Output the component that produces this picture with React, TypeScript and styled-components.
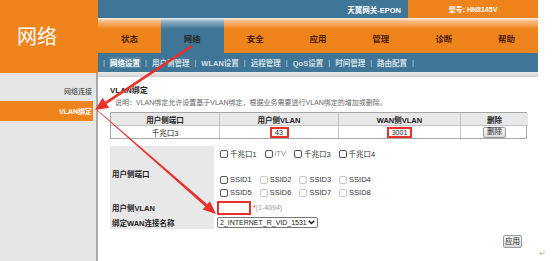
import React from 'react';
import styled, { createGlobalStyle } from 'styled-components';

const ORANGE = '#F0841C';
const BLUE = '#3F7596';
const RED = '#E8312B';

const GlobalStyle = createGlobalStyle`
  html, body { margin: 0; padding: 0; background: #fff; }
  body {
    font-family: "Liberation Sans", "Noto Sans CJK SC", sans-serif;
    font-size: 7.5px;
    color: #333;
  }
  * { box-sizing: border-box; }
`;

const Page = styled.div`
  position: relative;
  width: 554px;
  height: 261px;
  overflow: hidden;
  display: flex;
`;

const Frame = styled.div`
  width: 538px;
  height: 261px;
  display: flex;
  flex-shrink: 0;
`;

const LeftCol = styled.div`
  width: 98px;
  flex-shrink: 0;
  display: flex;
  flex-direction: column;
`;

const Logo = styled.div`
  height: 73px;
  background: ${ORANGE};
  color: #fff;
  font-family: "Noto Sans CJK SC", sans-serif;
  font-size: 20px;
  display: flex;
  align-items: center;
  padding-left: 17px;
  padding-bottom: 2px;
`;

const Sidebar = styled.div`
  flex: 1;
  background: #e6e6e6;
  border-right: 2px solid #a9a9a9;
  padding-top: 8px;
  display: flex;
  flex-direction: column;
`;

const SideItem = styled.div<{ $active?: boolean }>`
  height: 20px;
  display: flex;
  align-items: center;
  justify-content: flex-end;
  font-size: 7px;
  padding-right: ${(p) => (p.$active ? '1px' : '4px')};
  margin-right: ${(p) => (p.$active ? '3px' : '0')};
  background: ${(p) => (p.$active ? ORANGE : 'transparent')};
  color: ${(p) => (p.$active ? '#fff' : '#333')};
  font-weight: ${(p) => (p.$active ? 'bold' : 'normal')};
`;

const RightCol = styled.div`
  flex: 1;
  display: flex;
  flex-direction: column;
`;

const TopBar = styled.div`
  height: 18px;
  display: flex;
`;

const TopTitle = styled.div`
  flex: 1;
  background: ${BLUE};
  color: #fff;
  font-weight: bold;
  display: flex;
  align-items: center;
  justify-content: flex-end;
  padding-right: 7px;
`;

const ModelBox = styled.div`
  width: 130px;
  background: ${ORANGE};
  color: #fff;
  font-weight: bold;
  font-size: 7px;
  display: flex;
  align-items: center;
  justify-content: center;
`;

const NavTabs = styled.div`
  height: 35px;
  display: flex;
`;

const Tab = styled.div<{ $active?: boolean }>`
  flex: 1;
  background-color: ${(p) => (p.$active ? BLUE : ORANGE)};
  background-image: linear-gradient(
    to bottom,
    rgba(255, 255, 255, 0.9) 0px,
    rgba(255, 255, 255, 0.45) 3px,
    rgba(255, 255, 255, 0) 11px
  );
  color: ${(p) => (p.$active ? '#2a2a2a' : '#4a2000')};
  font-weight: bold;
  font-size: 8.5px;
  display: flex;
  align-items: center;
  justify-content: center;
  padding-top: 5px;
`;

const SubNav = styled.div`
  height: 19px;
  background: ${BLUE};
  display: flex;
  align-items: center;
  padding-left: 5px;
  gap: 4px;
  color: #d3dde5;
  font-weight: bold;
`;

const SubItem = styled.span<{ $active?: boolean }>`
  color: ${(p) => (p.$active ? '#fff' : '#d6e0e8')};
  background: ${(p) => (p.$active ? 'rgba(255,255,255,0.12)' : 'transparent')};
  padding: 0 1px;
`;

const Sep = styled.span`
  color: #c9d5de;
  font-weight: normal;
`;

const Strip = styled.div`
  height: 5px;
  background: linear-gradient(to bottom, #ececec, #d0d0d0);
`;

const Content = styled.div`
  flex: 1;
  padding: 8px 0 0 12px;
  display: flex;
  flex-direction: column;
`;

const Title = styled.div`
  font-weight: bold;
  font-size: 8px;
  line-height: 12px;
  color: #222;
`;

const Desc = styled.div`
  font-size: 7px;
  line-height: 11px;
  color: #666;
  padding-left: 5px;
`;

const BindTable = styled.div`
  margin-top: 4px;
  width: 417px;
  display: grid;
  grid-template-columns: 108px 119px 122px 68px;
  border: 1px solid #a8a8a8;
`;

const HeadCell = styled.div`
  height: 12px;
  background: #e8e8e8;
  font-weight: bold;
  color: #222;
  display: flex;
  align-items: center;
  justify-content: center;
  border-left: 1px solid #c4c4c4;
  &:first-child { border-left: none; }
`;

const DataCell = styled.div<{ $first?: boolean }>`
  height: 13px;
  display: flex;
  align-items: center;
  justify-content: center;
  border-top: 1px solid #c4c4c4;
  border-left: ${(p) => (p.$first ? 'none' : '1px solid #c4c4c4')};
  color: #222;
`;

const Marked = styled.span<{ $w: number }>`
  width: ${(p) => p.$w}px;
  height: 11px;
  border: 2px solid ${RED};
  display: flex;
  align-items: center;
  justify-content: center;
  line-height: 7px;
  font-size: 7px;
  overflow: visible;
`;

const SmallButton = styled.button`
  font-family: inherit;
  font-size: 7.5px;
  color: #222;
  padding: 0;
  height: 11px;
  width: 23px;
  border: 1px solid #9a9a9a;
  border-radius: 2px;
  background: linear-gradient(#f7f7f7, #dcdcdc);
  display: flex;
  align-items: center;
  justify-content: center;
  line-height: 1;
`;

const FormGrid = styled.div`
  margin-top: 7px;
  width: 417px;
  display: grid;
  grid-template-columns: 104px 1fr;
`;

const FormLabel = styled.div<{ $h: number }>`
  height: ${(p) => p.$h}px;
  background: #e8e8e8;
  font-weight: bold;
  color: #222;
  display: flex;
  align-items: center;
  padding-left: 2px;
`;

const FormValue = styled.div<{ $h: number }>`
  height: ${(p) => p.$h}px;
  padding-left: 3px;
  display: flex;
  flex-direction: column;
  justify-content: center;
`;

const PortValue = styled(FormValue)`
  justify-content: flex-start;
  padding-top: 1px;
`;

const CheckLine = styled.div`
  height: 13px;
  display: flex;
  align-items: center;
`;

const CheckItem = styled.label<{ $muted?: boolean }>`
  display: flex;
  align-items: center;
  margin-left: 3px;
  margin-right: 5px;
  color: ${(p) => (p.$muted ? '#888' : '#333')};
`;

const Box = styled.span<{ $disabled?: boolean }>`
  width: 8px;
  height: 8px;
  border: 1px solid ${(p) => (p.$disabled ? '#c8c8c8' : '#555')};
  border-radius: 2px;
  background: #fff;
  margin-right: 2px;
  flex-shrink: 0;
`;

const InputRow = styled.div`
  display: flex;
  align-items: center;
`;

const TextInput = styled.span`
  width: 34px;
  height: 14px;
  border: 2px solid ${RED};
  background: #fff;
`;

const Hint = styled.span`
  margin-left: 2px;
  color: #999;
  font-size: 7px;
`;

const Star = styled.span`
  color: ${RED};
`;

const Select = styled.div`
  width: 101px;
  height: 11px;
  border: 1px solid #777;
  border-radius: 2px;
  display: flex;
  align-items: center;
  justify-content: space-between;
  padding: 0 2px;
  color: #222;
  font-size: 7px;
  background: #fff;
  white-space: nowrap;
`;

const ButtonRow = styled.div`
  width: 417px;
  margin-top: 6px;
  display: flex;
  justify-content: flex-end;
  padding-right: 5px;
`;

const ApplyButton = styled(SmallButton)`
  width: 19px;
  height: 13px;
`;

const Margin = styled.div`
  flex: 1;
  display: flex;
  align-items: flex-end;
  padding: 0 0 3px 1px;
  color: #aaa;
  font-size: 8px;
`;

const Overlay = styled.svg`
  position: absolute;
  left: 0;
  top: 0;
  pointer-events: none;
`;

type Pt = [number, number];

function arrowParts(from: Pt, to: Pt, headLen: number, headHalf: number, w0: number, w1: number) {
  const dx = to[0] - from[0];
  const dy = to[1] - from[1];
  const len = Math.hypot(dx, dy);
  const ux = dx / len;
  const uy = dy / len;
  const px = -uy;
  const py = ux;
  const bx = to[0] - ux * headLen;
  const by = to[1] - uy * headLen;
  const f = (n: number) => n.toFixed(2);
  const shaft = [
    [from[0] + px * w0 / 2, from[1] + py * w0 / 2],
    [bx + px * w1 / 2, by + py * w1 / 2],
    [bx - px * w1 / 2, by - py * w1 / 2],
    [from[0] - px * w0 / 2, from[1] - py * w0 / 2],
  ]
    .map((p) => `${f(p[0])},${f(p[1])}`)
    .join(' ');
  const head = [
    [to[0], to[1]],
    [bx + px * headHalf, by + py * headHalf],
    [bx - px * headHalf, by - py * headHalf],
  ]
    .map((p) => `${f(p[0])},${f(p[1])}`)
    .join(' ');
  return { shaft, head };
}

const tabs = ['状态', '网络', '安全', '应用', '管理', '诊断', '帮助'];
const subs = ['网络设置', '用户侧管理', 'WLAN设置', '远程管理', 'QoS设置', '时间管理', '路由配置'];

export default function App() {
  const a1 = arrowParts([192, 46], [95, 110], 13, 6, 2.6, 2.6);
  const a2 = arrowParts([97, 110], [216, 214], 13, 5.5, 0.6, 3);
  return (
    <>
      <GlobalStyle />
      <Page>
        <Frame>
          <LeftCol>
            <Logo>网络</Logo>
            <Sidebar>
              <SideItem>网络连接</SideItem>
              <SideItem $active>VLAN绑定</SideItem>
            </Sidebar>
          </LeftCol>
          <RightCol>
            <TopBar>
              <TopTitle>天翼网关-EPON</TopTitle>
              <ModelBox>型号: HN8145V</ModelBox>
            </TopBar>
            <NavTabs>
              {tabs.map((t, i) => (
                <Tab key={t} $active={i === 1}>
                  {t}
                </Tab>
              ))}
            </NavTabs>
            <SubNav>
              <Sep>|</Sep>
              {subs.map((s, i) => (
                <React.Fragment key={s}>
                  <SubItem $active={i === 0}>{s}</SubItem>
                  <Sep>|</Sep>
                </React.Fragment>
              ))}
            </SubNav>
            <Strip />
            <Content>
              <Title>VLAN绑定</Title>
              <Desc>说明：VLAN绑定允许设置基于VLAN绑定，根据业务需要进行VLAN绑定的增加或删除。</Desc>
              <BindTable>
                <HeadCell>用户侧端口</HeadCell>
                <HeadCell>用户侧VLAN</HeadCell>
                <HeadCell>WAN侧VLAN</HeadCell>
                <HeadCell>删除</HeadCell>
                <DataCell $first>千兆口3</DataCell>
                <DataCell>
                  <Marked $w={19}>43</Marked>
                </DataCell>
                <DataCell>
                  <Marked $w={25}>3001</Marked>
                </DataCell>
                <DataCell>
                  <SmallButton>删除</SmallButton>
                </DataCell>
              </BindTable>
              <FormGrid>
                <FormLabel $h={54}>用户侧端口</FormLabel>
                <PortValue $h={54}>
                  <CheckLine>
                    <CheckItem>
                      <Box />千兆口1
                    </CheckItem>
                    <CheckItem $muted>
                      <Box />iTV
                    </CheckItem>
                    <CheckItem>
                      <Box />千兆口3
                    </CheckItem>
                    <CheckItem>
                      <Box />千兆口4
                    </CheckItem>
                  </CheckLine>
                  <CheckLine />
                  <CheckLine>
                    <CheckItem>
                      <Box />SSID1
                    </CheckItem>
                    <CheckItem>
                      <Box $disabled />SSID2
                    </CheckItem>
                    <CheckItem>
                      <Box $disabled />SSID3
                    </CheckItem>
                    <CheckItem>
                      <Box $disabled />SSID4
                    </CheckItem>
                  </CheckLine>
                  <CheckLine>
                    <CheckItem>
                      <Box />SSID5
                    </CheckItem>
                    <CheckItem>
                      <Box $disabled />SSID6
                    </CheckItem>
                    <CheckItem>
                      <Box $disabled />SSID7
                    </CheckItem>
                    <CheckItem>
                      <Box $disabled />SSID8
                    </CheckItem>
                  </CheckLine>
                </PortValue>
                <FormLabel $h={15}>用户侧VLAN</FormLabel>
                <FormValue $h={15}>
                  <InputRow>
                    <TextInput />
                    <Hint>
                      <Star>*</Star>(1-4094)
                    </Hint>
                  </InputRow>
                </FormValue>
                <FormLabel $h={14}>绑定WAN连接名称</FormLabel>
                <FormValue $h={14}>
                  <Select>
                    <span>2_INTERNET_R_VID_1531</span>
                    <svg width="7" height="5" viewBox="0 0 7 5">
                      <path d="M0.8 0.8 L3.5 3.6 L6.2 0.8" fill="none" stroke="#111" strokeWidth="1.4" />
                    </svg>
                  </Select>
                </FormValue>
              </FormGrid>
              <ButtonRow>
                <ApplyButton>应用</ApplyButton>
              </ButtonRow>
            </Content>
          </RightCol>
        </Frame>
        <Margin>↵</Margin>
        <Overlay width="554" height="261" viewBox="0 0 554 261">
          <polygon points={a1.shaft} fill={RED} />
          <polygon points={a1.head} fill={RED} />
          <polygon points={a2.shaft} fill={RED} />
          <polygon points={a2.head} fill={RED} />
        </Overlay>
      </Page>
    </>
  );
}
